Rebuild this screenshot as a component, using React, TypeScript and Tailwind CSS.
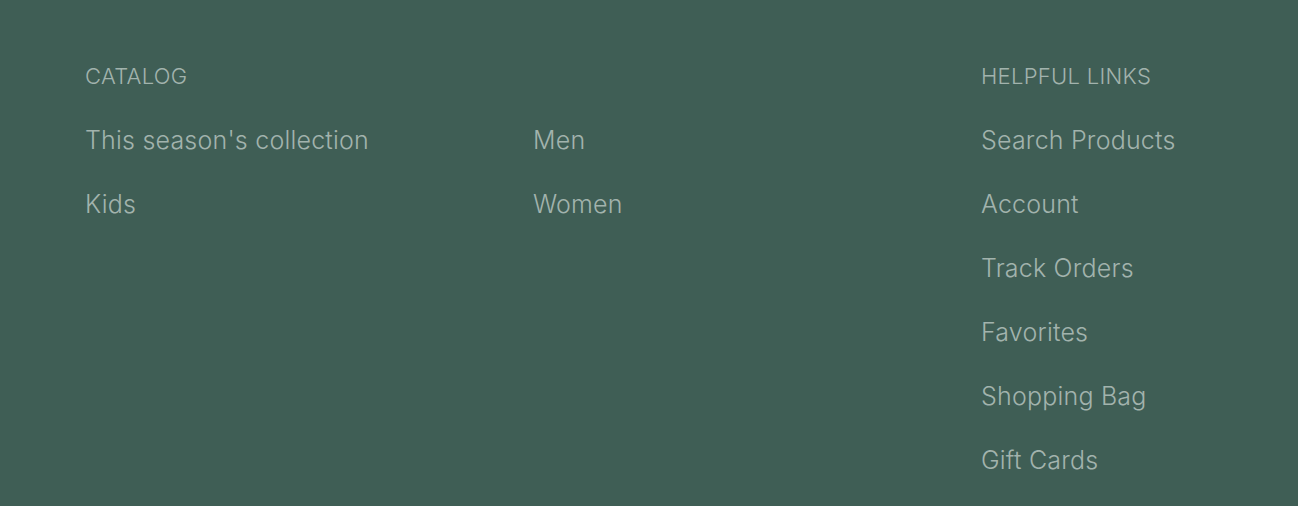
import React from "react";

const catalog = [
  ["This season's collection", "Men"],
  ["Kids", "Women"],
];

const helpful = [
  "Search Products",
  "Account",
  "Track Orders",
  "Favorites",
  "Shopping Bag",
  "Gift Cards",
];

const font = { fontFamily: "Inter, 'Noto Sans', sans-serif" };

export default function App() {
  return (
    <footer
      className="min-h-[506px] w-full bg-[#3f5e55] px-[85px] pt-[60px] pb-16 text-[#a2b3ad]"
      style={font}
    >
      <div className="grid grid-cols-[896px_1fr]">
        <section className="flex flex-col gap-8">
          <h3 className="h-8 text-[22px] leading-8 font-light uppercase tracking-[0.3px]">Catalog</h3>
          {catalog.map((row, i) => (
            <div key={i} className="grid grid-cols-2">
              {row.map((t) => (
                <a key={t} className="h-8 text-[25px] leading-8 font-light tracking-[0.2px]">
                  {t}
                </a>
              ))}
            </div>
          ))}
        </section>
        <section className="flex flex-col gap-8">
          <h3 className="h-8 text-[22px] leading-8 font-light uppercase tracking-[0.3px]">Helpful Links</h3>
          {helpful.map((t) => (
            <a key={t} className="h-8 text-[25px] leading-8 font-light tracking-[0.2px]">
              {t}
            </a>
          ))}
        </section>
      </div>
    </footer>
  );
}
